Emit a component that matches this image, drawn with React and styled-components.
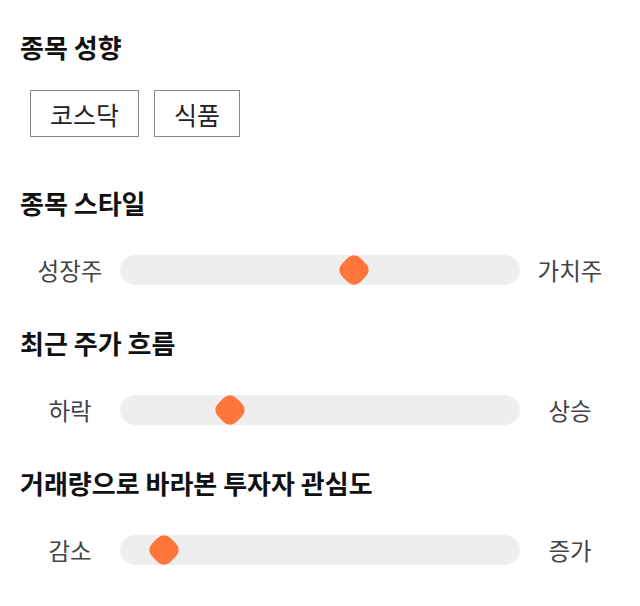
import React from "react";
import styled, { createGlobalStyle } from "styled-components";

const GlobalStyle = createGlobalStyle`
  html, body {
    margin: 0;
    padding: 0;
    background: #ffffff;
  }
  body {
    font-family: "Noto Sans CJK KR", "Noto Sans", sans-serif;
  }
`;

const Page = styled.div`
  width: 640px;
  padding: 32px 20px 0;
  box-sizing: border-box;
  display: flex;
  flex-direction: column;
  gap: 43px;
`;

const Section = styled.section`
  display: flex;
  flex-direction: column;
`;

const Heading = styled.h2`
  margin: 0;
  font-size: 26px;
  line-height: 30px;
  font-weight: 700;
  color: #111;
`;

const ChipRow = styled.div`
  display: flex;
  gap: 15px;
  margin: 28px 0 8px 10px;
`;

const Chip = styled.div`
  height: 47px;
  padding: 0 19px;
  box-sizing: border-box;
  border: 1px solid #8a8a8a;
  display: flex;
  align-items: center;
  font-size: 25px;
  color: #222;
`;

const SliderRow = styled.div`
  display: flex;
  align-items: center;
  margin-top: 37px;
`;

const EndLabel = styled.span`
  width: 100px;
  flex: none;
  text-align: center;
  font-size: 23.5px;
  line-height: 30px;
  color: #444;
`;

const Track = styled.div`
  position: relative;
  flex: 1;
  height: 30px;
  border-radius: 15px;
  background: #eeeeee;
`;

const Thumb = styled.div`
  position: absolute;
  top: 50%;
  width: 26px;
  height: 26px;
  border-radius: 9px;
  background: #ff763b;
  transform: translate(-50%, -50%) rotate(45deg);
`;

const sliders = [
  { title: "종목 스타일", left: "성장주", right: "가치주", pos: 58.5 },
  { title: "최근 주가 흐름", left: "하락", right: "상승", pos: 27.6 },
  { title: "거래량으로 바라본 투자자 관심도", left: "감소", right: "증가", pos: 11 },
];

const Slider = ({ left, right, pos }) => (
  <SliderRow>
    <EndLabel>{left}</EndLabel>
    <Track>
      <Thumb style={{ left: `${pos}%` }} />
    </Track>
    <EndLabel>{right}</EndLabel>
  </SliderRow>
);

export default function App() {
  return (
    <>
      <GlobalStyle />
      <Page>
        <Section>
          <Heading>종목 성향</Heading>
          <ChipRow>
            <Chip>코스닥</Chip>
            <Chip>식품</Chip>
          </ChipRow>
        </Section>
        {sliders.map((s) => (
          <Section key={s.title}>
            <Heading>{s.title}</Heading>
            <Slider left={s.left} right={s.right} pos={s.pos} />
          </Section>
        ))}
      </Page>
    </>
  );
}
